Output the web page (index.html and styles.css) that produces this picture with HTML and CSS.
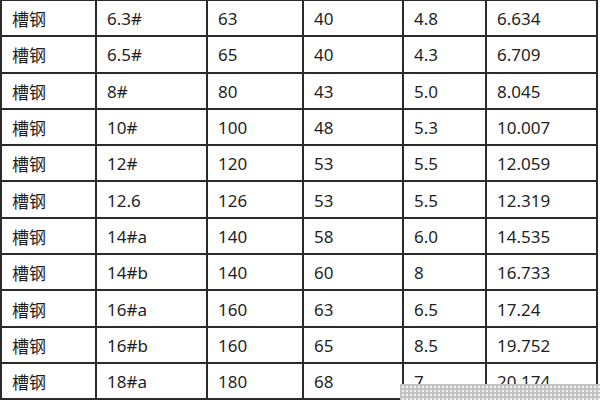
FILE: index.html
```html
<!DOCTYPE html>
<html lang="zh">
<head>
<meta charset="utf-8">
<link rel="stylesheet" href="styles.css">
</head>
<body>
<div class="page">
  <div class="grid">
    <div class="c">槽钢</div><div class="c">6.3#</div><div class="c">63</div><div class="c">40</div><div class="c">4.8</div><div class="c">6.634</div>
    <div class="c">槽钢</div><div class="c">6.5#</div><div class="c">65</div><div class="c">40</div><div class="c">4.3</div><div class="c">6.709</div>
    <div class="c">槽钢</div><div class="c">8#</div><div class="c">80</div><div class="c">43</div><div class="c">5.0</div><div class="c">8.045</div>
    <div class="c">槽钢</div><div class="c">10#</div><div class="c">100</div><div class="c">48</div><div class="c">5.3</div><div class="c">10.007</div>
    <div class="c">槽钢</div><div class="c">12#</div><div class="c">120</div><div class="c">53</div><div class="c">5.5</div><div class="c">12.059</div>
    <div class="c">槽钢</div><div class="c">12.6</div><div class="c">126</div><div class="c">53</div><div class="c">5.5</div><div class="c">12.319</div>
    <div class="c">槽钢</div><div class="c">14#a</div><div class="c">140</div><div class="c">58</div><div class="c">6.0</div><div class="c">14.535</div>
    <div class="c">槽钢</div><div class="c">14#b</div><div class="c">140</div><div class="c">60</div><div class="c">8</div><div class="c">16.733</div>
    <div class="c">槽钢</div><div class="c">16#a</div><div class="c">160</div><div class="c">63</div><div class="c">6.5</div><div class="c">17.24</div>
    <div class="c">槽钢</div><div class="c">16#b</div><div class="c">160</div><div class="c">65</div><div class="c">8.5</div><div class="c">19.752</div>
    <div class="c">槽钢</div><div class="c">18#a</div><div class="c">180</div><div class="c">68</div><div class="c">7</div><div class="c">20.174</div>
  </div>
  <div class="mask"></div>
</div>
</body>
</html>
```

FILE: styles.css
```css
html, body {
  margin: 0;
  padding: 0;
  background: #ffffff;
}
.page {
  position: relative;
  width: 600px;
  height: 400px;
  overflow: hidden;
}
.grid {
  display: grid;
  grid-template-columns: 93px 109px 94px 98px 81px 109px;
  grid-auto-rows: 34.3px;
  gap: 2px;
  padding: 0 2px 2px 2px;
  border-top: 1px solid #2b2b2b;
  width: max-content;
  background: #2b2b2b;
  font-family: "Noto Sans", "Noto Sans CJK SC", sans-serif;
  font-size: 17px;
  color: #1f1f1f;
}
.c {
  background: #ffffff;
  display: flex;
  align-items: center;
  padding-left: 10px;
  padding-top: 1px;
  white-space: nowrap;
}
.mask {
  position: absolute;
  left: 400px;
  top: 384px;
  width: 200px;
  height: 16px;
  background-color: #c4c4c4;
  background-image: radial-gradient(circle, #f2f2f2 0.8px, transparent 1.2px);
  background-size: 4px 4px;
  background-position: 1px 1px;
}
```
